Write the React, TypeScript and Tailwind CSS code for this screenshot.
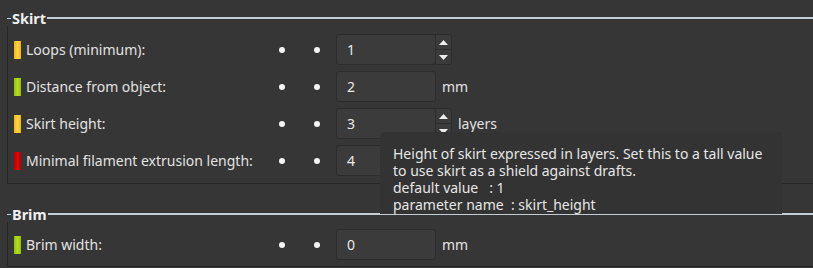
import React from 'react';

type Row = {
  label: string;
  color: 'yellow' | 'green' | 'red';
  value: string;
  spin?: boolean;
  unit?: string;
};

const skirtRows: Row[] = [
  { label: 'Loops (minimum):', color: 'yellow', value: '1', spin: true },
  { label: 'Distance from object:', color: 'green', value: '2', unit: 'mm' },
  { label: 'Skirt height:', color: 'yellow', value: '3', spin: true, unit: 'layers' },
  { label: 'Minimal filament extrusion length:', color: 'red', value: '4', spin: true },
];

const brimRows: Row[] = [{ label: 'Brim width:', color: 'green', value: '0', unit: 'mm' }];

function Bar({ color }: { color: Row['color'] }) {
  const cls =
    color === 'yellow'
      ? 'bg-gradient-to-r from-[#f2b400] via-[#ffd640] to-[#f2b400]'
      : color === 'green'
      ? 'bg-gradient-to-r from-[#94c000] via-[#b4dc1e] to-[#94c000]'
      : 'bg-gradient-to-r from-[#b80000] via-[#e00808] to-[#b80000]';
  return <span className={`block w-[7px] h-[18px] shrink-0 ${cls}`} />;
}

function Dot() {
  return <span className="block w-[6px] h-[6px] rounded-full bg-[#f4f4f4]" />;
}

function SettingRow({ row }: { row: Row }) {
  return (
    <div className="flex items-center h-[31px]">
      <div className="flex items-center w-[268px] pl-[6px]">
        <Bar color={row.color} />
        <span className="ml-[5px] text-[#e2e2e2] whitespace-nowrap">{row.label}</span>
      </div>
      <div className="flex items-center w-[60px]">
        <span className="ml-[3px]"><Dot /></span>
        <span className="ml-[29px]"><Dot /></span>
      </div>
      <div className="flex h-full">
        <div className="w-[100px] h-full rounded-[3px] border border-[#2c2c2c] bg-[#3b3b3b] flex items-center pl-[10px] text-[#e8e8e8]">
          {row.value}
        </div>
        {row.spin && (
          <div className="w-[17px] h-full flex flex-col border border-[#2c2c2c] rounded-r-[3px] bg-[#3b3b3b] -ml-[1px]">
            <div className="flex-1 flex items-center justify-center border-b border-[#2c2c2c]">
              <svg width="9" height="5" viewBox="0 0 9 5"><path d="M0 5 L4.5 0 L9 5 Z" fill="#eeeeee" /></svg>
            </div>
            <div className="flex-1 flex items-center justify-center">
              <svg width="9" height="5" viewBox="0 0 9 5"><path d="M0 0 L4.5 5 L9 0 Z" fill="#eeeeee" /></svg>
            </div>
          </div>
        )}
      </div>
      {row.unit && <span className="ml-[6px] text-[#e2e2e2]">{row.unit}</span>}
    </div>
  );
}

function Group({ title, rows, bodyClass }: { title: string; rows: Row[]; bodyClass: string }) {
  return (
    <div className="ml-[7px]">
      <div className="flex items-center h-[16px]">
        <span className="w-[4px] h-px bg-[#c4ccd4]" />
        <span className="font-bold text-[#f0f0f0] text-[14.5px] px-px leading-none">{title}</span>
        <span className="flex-1 h-[1.5px] bg-[#c4ccd4]" />
      </div>
      <div className={`border-l border-b border-[#262626] ${bodyClass}`}>
        <div className="flex flex-col gap-[6px]">
          {rows.map(r => (
            <SettingRow key={r.label} row={r} />
          ))}
        </div>
      </div>
    </div>
  );
}

export default function App() {
  return (
    <div
      className="relative w-[813px] h-[268px] overflow-hidden bg-[#363636] text-[14px]"
      style={{ fontFamily: '"Noto Sans", "DejaVu Sans", sans-serif' }}
    >
      <div className="pt-[10px]">
        <Group title="Skirt" rows={skirtRows} bodyClass="pt-[8px] pb-[7px]" />
        <div className="h-[22px]" />
        <Group title="Brim" rows={brimRows} bodyClass="pt-[7px] pb-[6px]" />
      </div>

      <div className="absolute left-[380px] top-[132px] w-[402px] h-[82px] bg-[#333333] rounded-tl-[5px] pl-[13px] pt-[13px] text-[#e6e6e6] leading-[17px]">
        <div>Height of skirt expressed in layers. Set this to a tall value</div>
        <div>to use skirt as a shield against drafts.</div>
        <div>default value&nbsp;&nbsp; : 1</div>
        <div>parameter name&nbsp; : skirt_height</div>
      </div>
    </div>
  );
}
